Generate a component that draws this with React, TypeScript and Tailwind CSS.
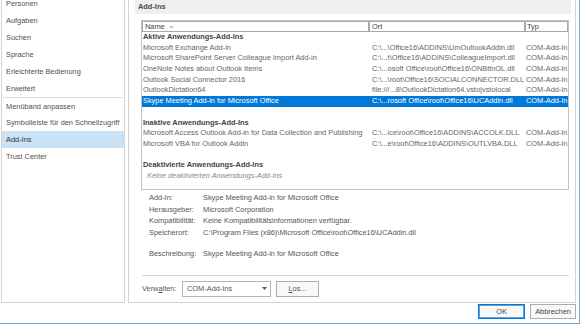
import React from "react";

const navItems = [
  "Personen",
  "Aufgaben",
  "Suchen",
  "Sprache",
  "Erleichterte Bedienung",
  "Erweitert",
  "Menüband anpassen",
  "Symbolleiste für den Schnellzugriff",
  "Add-Ins",
  "Trust Center",
];

type Row =
  | { kind: "group"; name: string }
  | { kind: "item"; name: string; ort: string; typ: string; sel?: boolean }
  | { kind: "blank" }
  | { kind: "empty"; name: string };

const rows: Row[] = [
  { kind: "group", name: "Aktive Anwendungs-Add-Ins" },
  { kind: "item", name: "Microsoft Exchange Add-in", ort: "C:\\...\\Office16\\ADDINS\\UmOutlookAddin.dll", typ: "COM-Add-In" },
  { kind: "item", name: "Microsoft SharePoint Server Colleague Import Add-in", ort: "C:\\...t\\Office16\\ADDINS\\ColleagueImport.dll", typ: "COM-Add-In" },
  { kind: "item", name: "OneNote Notes about Outlook Items", ort: "C:\\...osoft Office\\root\\Office16\\ONBttnOL.dll", typ: "COM-Add-In" },
  { kind: "item", name: "Outlook Social Connector 2016", ort: "C:\\...\\root\\Office16\\SOCIALCONNECTOR.DLL", typ: "COM-Add-In" },
  { kind: "item", name: "OutlookDictation64", ort: "file:///...8\\OutlookDictation64.vsto|vstolocal", typ: "COM-Add-In" },
  { kind: "item", name: "Skype Meeting Add-in for Microsoft Office", ort: "C:\\...rosoft Office\\root\\Office16\\UCAddin.dll", typ: "COM-Add-In", sel: true },
  { kind: "blank" },
  { kind: "group", name: "Inaktive Anwendungs-Add-Ins" },
  { kind: "item", name: "Microsoft Access Outlook Add-in for Data Collection and Publishing", ort: "C:\\...ice\\root\\Office16\\ADDINS\\ACCOLK.DLL", typ: "COM-Add-In" },
  { kind: "item", name: "Microsoft VBA for Outlook Addin", ort: "C:\\...e\\root\\Office16\\ADDINS\\OUTLVBA.DLL", typ: "COM-Add-In" },
  { kind: "blank" },
  { kind: "group", name: "Deaktivierte Anwendungs-Add-Ins" },
  { kind: "empty", name: "Keine deaktivierten Anwendungs-Add-Ins" },
];

function TableRow({ r }: { r: Row }) {
  if (r.kind === "blank") return <div className="h-[10.7px]" />;
  if (r.kind === "group")
    return (
      <div className="h-[10.7px] leading-[10.7px] pl-[1px] font-bold text-[#444] whitespace-nowrap">
        {r.name}
      </div>
    );
  if (r.kind === "empty")
    return (
      <div className="h-[10.7px] leading-[10.7px] pl-[5px] italic text-[#8a8a8a] whitespace-nowrap">
        {r.name}
      </div>
    );
  return (
    <div
      className={
        r.sel
          ? "flex h-[10.7px] leading-[10.7px] bg-[#0078d7] text-white whitespace-nowrap"
          : "flex h-[10.7px] leading-[10.7px] text-[#666] whitespace-nowrap"
      }
    >
      <div className="w-[227px] shrink-0 overflow-hidden pl-[1px]">{r.name}</div>
      <div className="w-[156px] shrink-0 overflow-hidden pl-[3px]">{r.ort}</div>
      <div className="w-[43px] shrink-0 overflow-hidden pl-[1px]">{r.typ}</div>
    </div>
  );
}

const details: [string, string][] = [
  ["Add-In:", "Skype Meeting Add-in for Microsoft Office"],
  ["Herausgeber:", "Microsoft Corporation"],
  ["Kompatibilität:", "Keine Kompatibilitätsinformationen verfügbar."],
  ["Speicherort:", "C:\\Program Files (x86)\\Microsoft Office\\root\\Office16\\UCAddin.dll"],
];

export default function App() {
  return (
    <div className="w-[580px] h-[324px] bg-white border-r border-b border-[#7aa6d9] overflow-hidden font-['Liberation_Sans',Arial,sans-serif] text-[7.4px] text-[#505050]">
      <div className="flex h-[303px] pl-[1px]">
        {/* Left navigation */}
        <div className="w-[124px] h-[303px] border-l border-r border-b border-[#d4d4d4] overflow-hidden">
          <div className="mt-[-5px]">
            {navItems.map((n, i) => (
              <div
                key={n}
                className={
                  (n === "Add-Ins"
                    ? "bg-[#c9e2f6] text-[#333] "
                    : "text-[#505050] ") +
                  (i === 6 ? "border-t border-[#dcdcdc] mx-[1px] pl-[3px] " : "pl-[4px] ") +
                  "h-[17px] leading-[17px] whitespace-nowrap"
                }
              >
                {n}
              </div>
            ))}
          </div>
        </div>

        <div className="w-[3px]" />

        {/* Right content panel */}
        <div className="w-[448px] h-[303px] border-l border-r border-b border-[#d4d4d4] pl-[6px] pr-[4px] flex flex-col">
          <div className="h-[14px] bg-[#efefef] pl-[3px] leading-[14px] font-bold text-[#4a4a4a]">
            Add-Ins
          </div>

          {/* Table */}
          <div className="mt-[6px] ml-[6px] mr-[2px] h-[170px] border border-[#c4c4c4] flex flex-col overflow-hidden">
            <div className="flex h-[11px] text-[#444]">
              <div className="w-[227px] shrink-0 border border-[#a8a8a8] pl-[2px] leading-[9px] flex items-center gap-[4px]">
                <span>Name</span>
                <svg width="5" height="4" viewBox="0 0 5 4">
                  <path d="M0.5 3.2 L2.5 1 L4.5 3.2" fill="none" stroke="#777" strokeWidth="0.8" />
                </svg>
              </div>
              <div className="w-[156px] shrink-0 border border-[#a8a8a8] pl-[2px] leading-[9px]">Ort</div>
              <div className="w-[43px] shrink-0 border border-[#a8a8a8] pl-[1px] leading-[9px]">Typ</div>
            </div>
            {rows.map((r, i) => (
              <TableRow key={i} r={r} />
            ))}
          </div>

          {/* Details */}
          <div className="mt-[2px] ml-[14px] text-[#555]">
            {details.map(([l, v]) => (
              <div key={l} className="flex h-[11.7px] leading-[11.7px] whitespace-nowrap">
                <div className="w-[54px] shrink-0">{l}</div>
                <div>{v}</div>
              </div>
            ))}
            <div className="flex h-[11.7px] leading-[11.7px] mt-[9.2px] whitespace-nowrap">
              <div className="w-[54px] shrink-0">Beschreibung:</div>
              <div>Skype Meeting Add-in for Microsoft Office</div>
            </div>
          </div>

          <div className="mt-[15px] ml-[7px] mr-[2px] h-[1px] bg-[#d6d6d6]" />

          <div className="mt-[5px] ml-[7px] flex items-center h-[16px] text-[#555]">
            <div className="w-[40px] shrink-0">
              Verw<span className="underline">a</span>lten:
            </div>
            <div className="w-[89px] h-[16px] border border-[#b5b5b5] flex items-center justify-between pl-[4px] pr-[3px]">
              <span>COM-Add-Ins</span>
              <svg width="5" height="3" viewBox="0 0 5 3">
                <path d="M0 0 L5 0 L2.5 3 Z" fill="#555" />
              </svg>
            </div>
            <div className="ml-[5px] w-[43px] h-[16px] border border-[#adadad] bg-[#f8f8f8] flex items-center justify-center">
              <span>
                <span className="underline">L</span>os...
              </span>
            </div>
          </div>
        </div>
      </div>

      {/* Bottom buttons */}
      <div className="flex justify-end pt-[1px] pr-[3px] gap-[5px] text-[#444]">
        <div className="w-[47px] h-[15px] border border-[#0078d7] shadow-[inset_0_0_0_1px_#5fa2e0] bg-[#f8f8f8] flex items-center justify-center">
          OK
        </div>
        <div className="w-[46px] h-[15px] border border-[#adadad] bg-[#f8f8f8] flex items-center justify-center">
          Abbrechen
        </div>
      </div>
    </div>
  );
}
